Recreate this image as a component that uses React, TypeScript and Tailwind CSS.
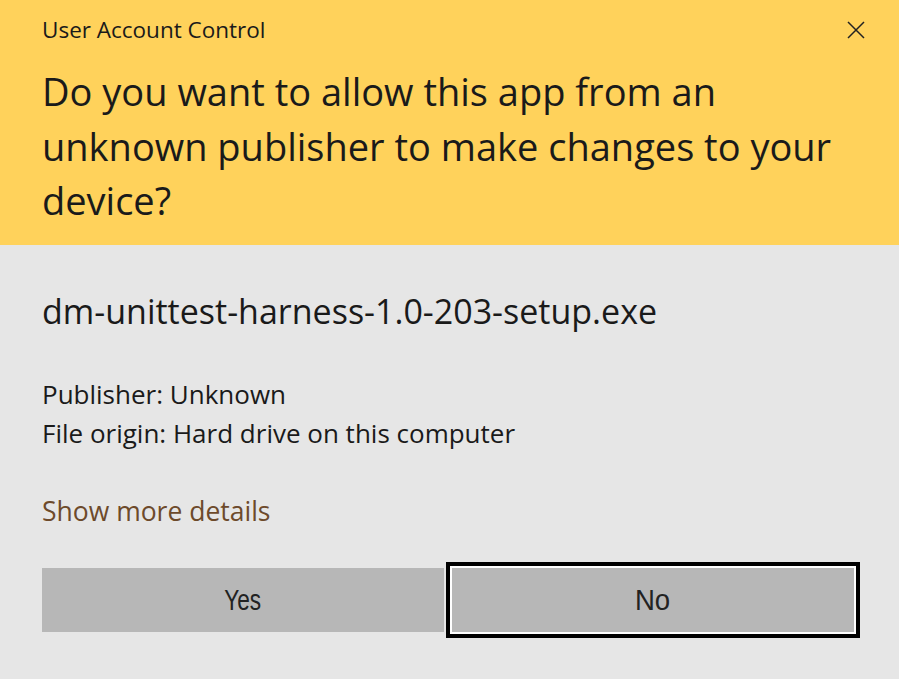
import React from "react";

export default function App() {
  const font = { fontFamily: '"Open Sans", "Noto Sans", sans-serif' };
  const btnFont = { fontFamily: '"Liberation Sans", Arial, sans-serif' };
  return (
    <div className="w-[899px] h-[679px] flex flex-col bg-[#e6e6e6] overflow-hidden" style={font}>
      <div className="h-[245px] shrink-0 bg-[#ffd25b] pl-[42px] pr-[28px] flex flex-col text-[#1a1a1a]">
        <div className="flex items-start justify-between pt-[14px]">
          <div className="text-[22.5px] leading-[32px]">User Account Control</div>
          <svg width="18" height="18" viewBox="0 0 18 18" className="mt-[7px] mr-[6px]">
            <path d="M1 1 L17 17 M17 1 L1 17" stroke="#222" strokeWidth="1.5" fill="none" />
          </svg>
        </div>
        <div className="mt-[18px] text-[38px] leading-[54.5px] w-[800px]">
          Do you want to allow this app from an unknown publisher to make changes to your device?
        </div>
      </div>
      <div className="flex-1 pl-[42px] flex flex-col text-[#1a1a1a]">
        <div className="mt-[44px] text-[34px] leading-[44px] whitespace-nowrap">dm-unittest-harness-1.0-203-setup.exe</div>
        <div className="mt-[42px] text-[26px] leading-[39px]">
          <div>Publisher: Unknown</div>
          <div>File origin: Hard drive on this computer</div>
        </div>
        <div className="mt-[41px] text-[26.5px] leading-[34px] text-[#6d4a2b]">Show more details</div>
        <div className="mt-[34px] flex items-center">
          <div className="w-[402px] h-[64px] bg-[#b7b7b7] flex items-center justify-center">
            <span className="text-[29px] leading-none text-[#222] inline-block scale-x-[0.78]" style={btnFont}>Yes</span>
          </div>
          <div className="ml-[2px] w-[414px] h-[76px] border-4 border-black bg-white p-[2px]">
            <div className="w-full h-full bg-[#b7b7b7] flex items-center justify-center">
              <span className="text-[29px] leading-none text-[#222] inline-block scale-x-[0.95]" style={btnFont}>No</span>
            </div>
          </div>
        </div>
      </div>
    </div>
  );
}
